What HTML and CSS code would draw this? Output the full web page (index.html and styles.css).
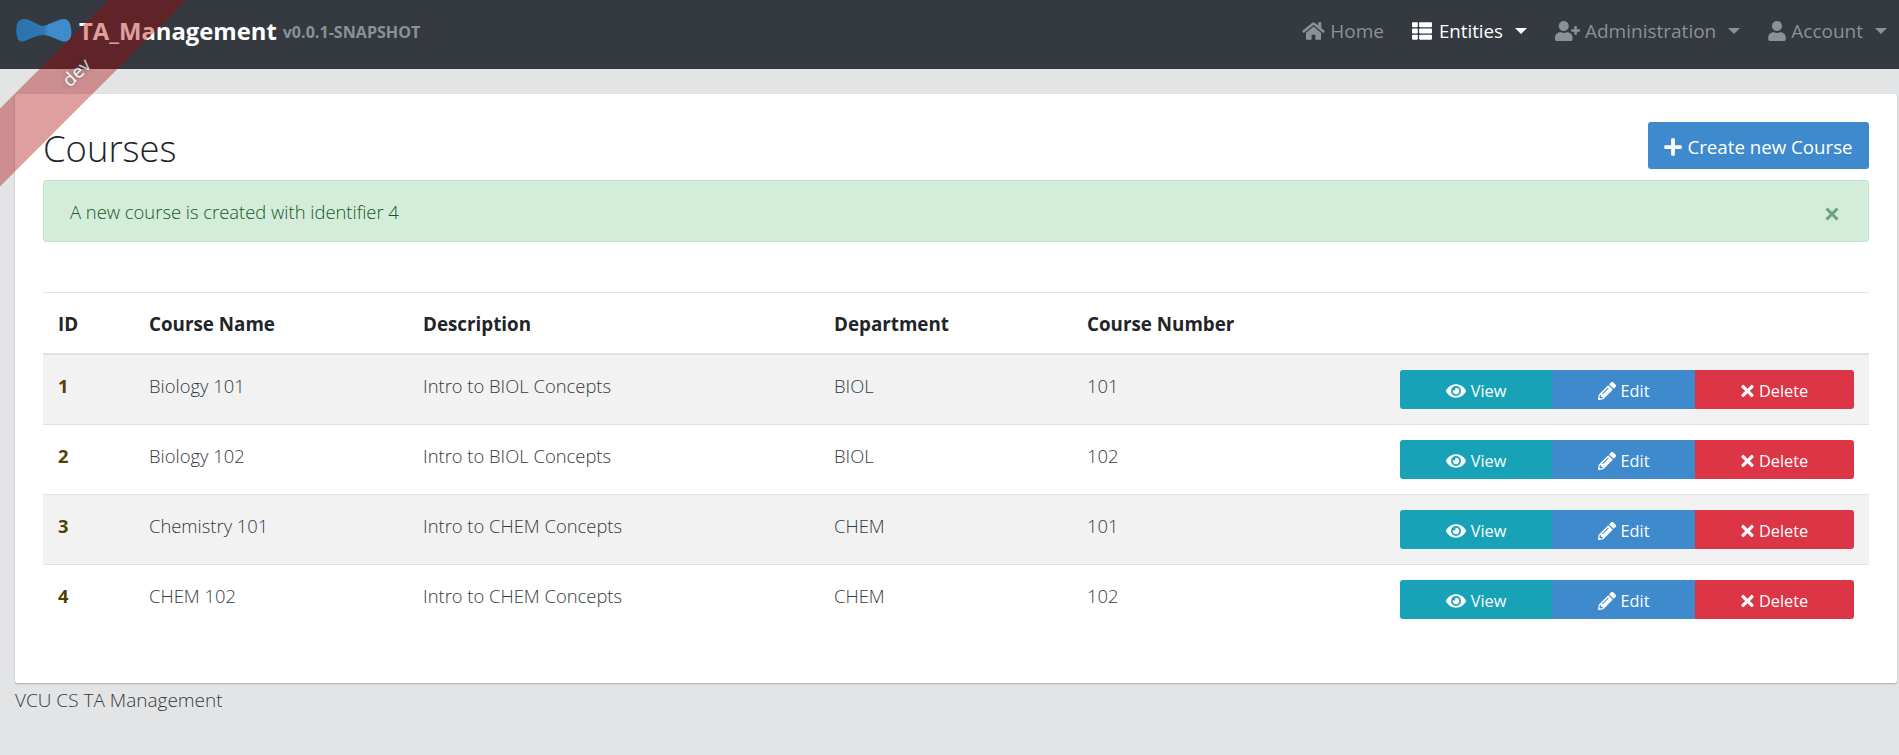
FILE: index.html
```html
<!DOCTYPE html>
<html lang="en">
<head>
<meta charset="utf-8">
<title>TA_Management</title>
<link rel="stylesheet" href="styles.css">
</head>
<body>
<svg class="sprite" aria-hidden="true">
  <symbol id="i-home" viewBox="0 0 576 512"><path d="M280.37 148.26L96 300.11V464a16 16 0 0 0 16 16l112.06-.29a16 16 0 0 0 15.92-16V368a16 16 0 0 1 16-16h64a16 16 0 0 1 16 16v95.64a16 16 0 0 0 16 16.05L464 480a16 16 0 0 0 16-16V300L295.67 148.26a12.19 12.19 0 0 0-15.3 0zM571.6 251.47L488 182.56V44.05a12 12 0 0 0-12-12h-56a12 12 0 0 0-12 12v72.61L318.47 43a48 48 0 0 0-61 0L4.34 251.47a12 12 0 0 0-1.6 16.9l25.5 31A12 12 0 0 0 45.15 301l235.22-193.74a12.19 12.19 0 0 1 15.3 0L530.9 301a12 12 0 0 0 16.9-1.6l25.5-31a12 12 0 0 0-1.7-16.93z"/></symbol>
  <symbol id="i-list" viewBox="0 0 512 512"><path d="M149.333 216v80c0 13.255-10.745 24-24 24H24c-13.255 0-24-10.745-24-24v-80c0-13.255 10.745-24 24-24h101.333c13.255 0 24 10.745 24 24zM0 376v80c0 13.255 10.745 24 24 24h101.333c13.255 0 24-10.745 24-24v-80c0-13.255-10.745-24-24-24H24c-13.255 0-24 10.745-24 24zM125.333 32H24C10.745 32 0 42.745 0 56v80c0 13.255 10.745 24 24 24h101.333c13.255 0 24-10.745 24-24V56c0-13.255-10.745-24-24-24zm80 448H488c13.255 0 24-10.745 24-24v-80c0-13.255-10.745-24-24-24H205.333c-13.255 0-24 10.745-24 24v80c0 13.255 10.745 24 24 24zm-24-424v80c0 13.255 10.745 24 24 24H488c13.255 0 24-10.745 24-24V56c0-13.255-10.745-24-24-24H205.333c-13.255 0-24 10.745-24 24zm24 264H488c13.255 0 24-10.745 24-24v-80c0-13.255-10.745-24-24-24H205.333c-13.255 0-24 10.745-24 24v80c0 13.255 10.745 24 24 24z"/></symbol>
  <symbol id="i-user-plus" viewBox="0 0 640 512"><path d="M624 208h-64v-64c0-8.8-7.2-16-16-16h-32c-8.8 0-16 7.2-16 16v64h-64c-8.8 0-16 7.2-16 16v32c0 8.8 7.2 16 16 16h64v64c0 8.8 7.2 16 16 16h32c8.8 0 16-7.2 16-16v-64h64c8.8 0 16-7.2 16-16v-32c0-8.8-7.2-16-16-16zm-400 48c70.7 0 128-57.3 128-128S294.7 0 224 0 96 57.3 96 128s57.3 128 128 128zm89.6 32h-16.7c-22.2 10.2-46.9 16-72.9 16s-50.6-5.8-72.9-16h-16.7C60.2 288 0 348.2 0 422.4V464c0 26.5 21.5 48 48 48h352c26.5 0 48-21.5 48-48v-41.6c0-74.2-60.2-134.4-134.4-134.4z"/></symbol>
  <symbol id="i-user" viewBox="0 0 448 512"><path d="M224 256c70.7 0 128-57.3 128-128S294.7 0 224 0 96 57.3 96 128s57.3 128 128 128zm89.6 32h-16.7c-22.2 10.2-46.9 16-72.9 16s-50.6-5.8-72.9-16h-16.7C60.2 288 0 348.2 0 422.4V464c0 26.5 21.5 48 48 48h352c26.5 0 48-21.5 48-48v-41.6c0-74.2-60.2-134.4-134.4-134.4z"/></symbol>
  <symbol id="i-plus" viewBox="0 0 448 512"><path d="M416 208H272V64c0-17.67-14.33-32-32-32h-32c-17.67 0-32 14.33-32 32v144H32c-17.67 0-32 14.33-32 32v32c0 17.67 14.33 32 32 32h144v144c0 17.67 14.33 32 32 32h32c17.67 0 32-14.33 32-32V304h144c17.67 0 32-14.33 32-32v-32c0-17.67-14.33-32-32-32z"/></symbol>
  <symbol id="i-eye" viewBox="0 0 576 512"><path d="M572.52 241.4C518.29 135.59 410.93 64 288 64S57.68 135.64 3.48 241.41a32.35 32.35 0 0 0 0 29.19C57.71 376.41 165.07 448 288 448s230.32-71.64 284.52-177.41a32.35 32.35 0 0 0 0-29.19zM288 400a144 144 0 1 1 144-144 143.93 143.93 0 0 1-144 144zm0-240a95.31 95.31 0 0 0-25.31 3.79 47.85 47.85 0 0 1-66.9 66.9A95.78 95.78 0 1 0 288 160z"/></symbol>
  <symbol id="i-pencil" viewBox="0 0 512 512"><path d="M497.9 142.1l-46.1 46.1c-4.7 4.7-12.3 4.7-17 0l-111-111c-4.7-4.7-4.7-12.3 0-17l46.1-46.1c18.7-18.7 49.1-18.7 67.9 0l60.1 60.1c18.8 18.7 18.8 49.1 0 67.9zM284.2 99.8L21.6 362.4.4 483.9c-2.9 16.4 11.4 30.6 27.8 27.8l121.5-21.3 262.6-262.6c4.7-4.7 4.7-12.3 0-17l-111-111c-4.8-4.7-12.4-4.7-17.1 0zM124.1 339.9c-5.5-5.5-5.5-14.3 0-19.8l154-154c5.5-5.5 14.3-5.5 19.8 0s5.5 14.3 0 19.8l-154 154c-5.5 5.5-14.3 5.5-19.8 0zM88 424h48v36.3l-64.5 11.3-31.1-31.1L51.7 376H88v48z"/></symbol>
  <symbol id="i-times" viewBox="0 0 352 512"><path d="M242.72 256l100.07-100.07c12.28-12.28 12.28-32.19 0-44.48l-22.24-22.24c-12.28-12.28-32.19-12.28-44.48 0L176 189.28 75.93 89.21c-12.28-12.28-32.19-12.28-44.48 0L9.21 111.45c-12.28 12.28-12.28 32.19 0 44.48L109.28 256 9.21 356.07c-12.28 12.28-12.28 32.19 0 44.48l22.24 22.24c12.28 12.28 32.2 12.28 44.48 0L176 322.72l100.07 100.07c12.28 12.28 32.2 12.28 44.48 0l22.24-22.24c12.28-12.28 12.28-32.19 0-44.48L242.72 256z"/></symbol>
</svg>

<div class="ribbon"><a href="#">dev</a></div>

<nav class="navbar">
  <a class="brand" href="#">
    <svg class="logo" viewBox="0 0 56 23">
      <defs>
        <linearGradient id="tie" x1="0" x2="1" y1="0" y2="0">
          <stop offset="0" stop-color="#2a74ad"/>
          <stop offset="0.5" stop-color="#2f78b3"/>
          <stop offset="0.58" stop-color="#3f8ccd"/>
          <stop offset="1" stop-color="#3f8ccd"/>
        </linearGradient>
      </defs>
      <path fill="url(#tie)" d="M1 5C2 2 5 0 9 0C16 1 21 6 27 7C33 6 40 1 47 0C51 0 53 2 54 5C55.500 10 56 15 54.500 19C53 22 50 23 47 22.500C41 21 34 16 27 16C20 16 13 21 7 22.500C4 23 2 21.500 1.500 19C0 15 0 10 1 5Z"/>
    </svg>
    <span class="brand-title">TA_Management</span>
    <span class="brand-version">v0.0.1-SNAPSHOT</span>
  </a>
  <ul class="nav">
    <li class="nav-item"><svg class="ic ic-home"><use href="#i-home"/></svg><span>Home</span></li>
    <li class="nav-item active"><svg class="ic ic-list"><use href="#i-list"/></svg><span>Entities</span><i class="caret"></i></li>
    <li class="nav-item"><svg class="ic ic-userplus"><use href="#i-user-plus"/></svg><span>Administration</span><i class="caret"></i></li>
    <li class="nav-item"><svg class="ic ic-user"><use href="#i-user"/></svg><span>Account</span><i class="caret"></i></li>
  </ul>
</nav>

<main class="page">
  <section class="card">
    <div class="head">
      <h2 class="title">Courses</h2>
      <a class="btn btn-create" href="#"><svg class="ic ic-plus"><use href="#i-plus"/></svg><span>Create new Course</span></a>
    </div>
    <div class="alert">
      <span>A new course is created with identifier 4</span>
      <svg class="ic ic-close" viewBox="0 0 14 14"><path d="M1.500 1.500L12.500 12.500M12.500 1.500L1.500 12.500"/></svg>
    </div>
    <table class="table">
      <colgroup>
        <col class="c-id"><col class="c-name"><col class="c-desc"><col class="c-dept"><col class="c-num"><col>
      </colgroup>
      <thead>
        <tr><th>ID</th><th>Course Name</th><th>Description</th><th>Department</th><th>Course Number</th><th></th></tr>
      </thead>
      <tbody>
        <tr>
          <td class="id">1</td><td>Biology 101</td><td>Intro to BIOL Concepts</td><td>BIOL</td><td>101</td>
          <td class="actions"><div class="group">
            <a class="gb gb-view" href="#"><svg class="ic ic-eye"><use href="#i-eye"/></svg><span>View</span></a>
            <a class="gb gb-edit" href="#"><svg class="ic ic-pencil"><use href="#i-pencil"/></svg><span>Edit</span></a>
            <a class="gb gb-del" href="#"><svg class="ic ic-times"><use href="#i-times"/></svg><span>Delete</span></a>
          </div></td>
        </tr>
        <tr>
          <td class="id">2</td><td>Biology 102</td><td>Intro to BIOL Concepts</td><td>BIOL</td><td>102</td>
          <td class="actions"><div class="group">
            <a class="gb gb-view" href="#"><svg class="ic ic-eye"><use href="#i-eye"/></svg><span>View</span></a>
            <a class="gb gb-edit" href="#"><svg class="ic ic-pencil"><use href="#i-pencil"/></svg><span>Edit</span></a>
            <a class="gb gb-del" href="#"><svg class="ic ic-times"><use href="#i-times"/></svg><span>Delete</span></a>
          </div></td>
        </tr>
        <tr>
          <td class="id">3</td><td>Chemistry 101</td><td>Intro to CHEM Concepts</td><td>CHEM</td><td>101</td>
          <td class="actions"><div class="group">
            <a class="gb gb-view" href="#"><svg class="ic ic-eye"><use href="#i-eye"/></svg><span>View</span></a>
            <a class="gb gb-edit" href="#"><svg class="ic ic-pencil"><use href="#i-pencil"/></svg><span>Edit</span></a>
            <a class="gb gb-del" href="#"><svg class="ic ic-times"><use href="#i-times"/></svg><span>Delete</span></a>
          </div></td>
        </tr>
        <tr>
          <td class="id">4</td><td>CHEM 102</td><td>Intro to CHEM Concepts</td><td>CHEM</td><td>102</td>
          <td class="actions"><div class="group">
            <a class="gb gb-view" href="#"><svg class="ic ic-eye"><use href="#i-eye"/></svg><span>View</span></a>
            <a class="gb gb-edit" href="#"><svg class="ic ic-pencil"><use href="#i-pencil"/></svg><span>Edit</span></a>
            <a class="gb gb-del" href="#"><svg class="ic ic-times"><use href="#i-times"/></svg><span>Delete</span></a>
          </div></td>
        </tr>
      </tbody>
    </table>
  </section>
  <footer class="footer">VCU CS TA Management</footer>
</main>
</body>
</html>
```
FILE: styles.css
```css
* { box-sizing: border-box; }
html, body { margin: 0; height: 100%; overflow: hidden; }
body {
  background: #e3e4e6;
  color: #212529;
  font-family: "Open Sans", "Noto Sans", sans-serif;
  font-weight: 300;
  font-size: 16px;
  line-height: 24px;
}
a { text-decoration: none; color: inherit; }
.sprite { display: none; }
.ic { fill: currentColor; display: block; flex: none; }

.ribbon {
  position: absolute;
  top: 46px;
  left: -76px;
  width: 300px;
  height: 55px;
  background: rgba(170, 0, 0, 0.5);
  opacity: 0.75;
  transform: rotate(-45deg);
  overflow: hidden;
  z-index: 10;
  pointer-events: none;
}
.ribbon a {
  display: block;
  color: #fff;
  font-weight: 400;
  font-size: 18.500px;
  line-height: 55px;
  padding-left: 5px;
  text-align: center;
  text-shadow: 0 0 5px #444;
}

.navbar {
  height: 69px;
  background: #343a40;
  display: flex;
  align-items: center;
  justify-content: space-between;
  padding: 0 12px 8px 16px;
}
.brand { display: flex; align-items: center; }
.logo { width: 56px; height: 23px; margin-right: 7px; flex: none; }
.brand-title { color: #fff; font-weight: 700; font-size: 23.800px; margin-right: 6px; }
.brand-version { color: #8b9197; font-weight: 700; font-size: 16.100px; position: relative; top: 1px; }

.nav { list-style: none; margin: 0; padding: 0; display: flex; align-items: center; }
.nav-item { display: flex; align-items: center; color: #8b9196; font-size: 19px; font-weight: 400; margin-left: 28px; }
.nav-item.active { color: #fff; font-size: 18.700px; }
.nav-item span { display: block; }
.caret {
  width: 0; height: 0;
  margin-left: 12px;
  border-top: 6px solid currentColor;
  border-left: 6px solid transparent;
  border-right: 6px solid transparent;
}
.ic-home { width: 23px; height: 20px; margin-right: 5px; }
.ic-list { width: 20px; height: 20px; margin-right: 7px; }
.ic-userplus { width: 25px; height: 20px; margin-right: 5px; }
.ic-user { width: 18px; height: 20px; margin-right: 5px; }

.page { padding: 25px 2px 0 15px; }
.card {
  background: #fff;
  border-radius: 3px;
  box-shadow: 0 1px 2px rgba(0, 0, 0, 0.25);
  height: 589px;
  padding: 28px 28px 0;
}
.head { display: flex; justify-content: space-between; align-items: flex-start; height: 47px; }
.title { margin: 0; font-weight: 300; font-size: 36.400px; line-height: 53px; color: #212529; }
.btn {
  display: flex;
  align-items: center;
  justify-content: center;
  height: 47px;
  padding-top: 2px;
  border-radius: 3px;
  color: #fff;
  background: #3e8acc;
  font-size: 18.700px;
  font-weight: 400;
}
.btn-create { width: 221px; }
.ic-plus { width: 18px; height: 20px; margin-right: 5px; }

.alert {
  margin-top: 11px;
  height: 62px;
  display: flex;
  align-items: center;
  justify-content: space-between;
  padding: 2px 29px 0 26px;
  background: #d4edda;
  border: 1px solid #c3e6cb;
  border-radius: 3px;
  color: #155724;
  font-size: 18.400px;
}
.ic-close {
  width: 14px;
  height: 14px;
  fill: none;
  stroke: #6f9f7f;
  stroke-width: 3;
  position: relative;
  top: 2px;
}

.table { width: 100%; margin-top: 50px; border-collapse: separate; border-spacing: 0; table-layout: fixed; }
.c-id { width: 91px; }
.c-name { width: 274px; }
.c-desc { width: 411px; }
.c-dept { width: 253px; }
.c-num { width: 300px; }
.table th, .table td { padding: 0 15px; text-align: left; vertical-align: middle; }
.table th {
  font-weight: 700;
  font-size: 18.800px;
  height: 63px;
  padding-top: 2px;
  border-top: 1px solid #dee2e6;
  border-bottom: 2px solid #dee2e6;
}
.table td { height: 70px; padding-bottom: 8px; border-bottom: 1px solid #dee2e6; font-size: 18.400px; color: #343a40; }
.table tbody tr:nth-child(odd) { background: #f2f2f2; }
.table tbody tr:last-child td { border-bottom-color: transparent; }
.table td.id { font-weight: 700; color: #533f03; }
.table td.actions { padding: 0 15px; }

.group { display: flex; justify-content: flex-end; }
.gb {
  display: flex;
  align-items: center;
  justify-content: center;
  height: 39px;
  padding-top: 2px;
  color: #fff;
  font-size: 16.300px;
  font-weight: 400;
}
.gb-view { width: 152px; background: #17a2b8; border-radius: 3px 0 0 3px; }
.gb-edit { width: 143px; background: #3e8acc; }
.gb-del { width: 159px; background: #dc3545; border-radius: 0 3px 3px 0; }
.ic-eye { width: 20px; height: 18px; margin-right: 5px; }
.ic-pencil { width: 18px; height: 18px; margin-right: 5px; }
.ic-times { width: 13px; height: 18px; margin-right: 5px; }

.footer { height: 36px; padding-top: 5px; font-size: 19px; color: #343a40; }
```
